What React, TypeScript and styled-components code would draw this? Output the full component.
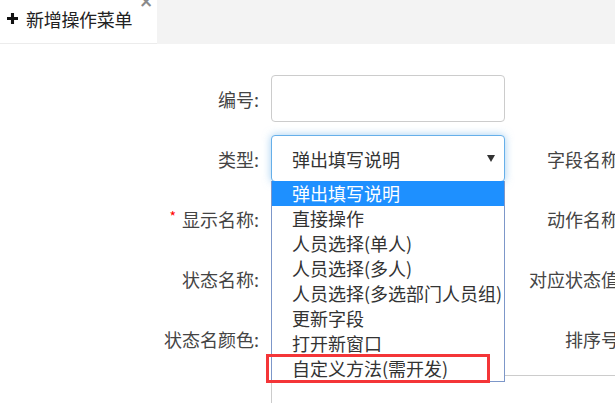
import React from 'react';
import styled, {createGlobalStyle} from "styled-components";

const GlobalStyle = createGlobalStyle`
  html, body {
    margin: 0;
    padding: 0;
    background: #fff;
    overflow: hidden;
  }
  body {
    font-family: "Noto Sans CJK SC", "Noto Sans", sans-serif;
    color: #333;
  }
`

const typeOptions = [
    '弹出填写说明',
    '直接操作',
    '人员选择(单人)',
    '人员选择(多人)',
    '人员选择(多选部门人员组)',
    '更新字段',
    '打开新窗口',
    '自定义方法(需开发)',
]

interface RowData {
    label: string;
    required?: boolean;
    right?: string;
}

const rows: RowData[] = [
    {label: '编号'},
    {label: '类型', right: '字段名称'},
    {label: '显示名称', required: true, right: '动作名称'},
    {label: '状态名称', right: '对应状态值'},
    {label: '状态名颜色', right: '排序号'},
]

export default function App() {
    return (
        <Page>
            <GlobalStyle/>
            <TabBar>
                <Tab>
                    <PlusIcon viewBox="0 0 10 10">
                        <path d="M3.6 0h2.8v3.6H10v2.8H6.4V10H3.6V6.4H0V3.6h3.6z"/>
                    </PlusIcon>
                    <TabTitle>新增操作菜单</TabTitle>
                    <CloseIcon>×</CloseIcon>
                </Tab>
            </TabBar>

            <Form>
                {rows.map((row, i) => (
                    <React.Fragment key={row.label}>
                        <Label>
                            {row.required && <Star>*</Star>}
                            {row.label}:
                        </Label>
                        {i === 1 ? (
                            <SelectWrap>
                                <Select>
                                    <span>{typeOptions[0]}</span>
                                    <Caret/>
                                </Select>
                                <OptionList>
                                    {typeOptions.map((opt, idx) => (
                                        <Option key={opt} $active={idx === 0}>
                                            {opt}
                                            {idx === typeOptions.length - 1 && <Highlight/>}
                                        </Option>
                                    ))}
                                </OptionList>
                            </SelectWrap>
                        ) : (
                            <Input/>
                        )}
                        {row.right ? (
                            <>
                                <Label>{row.right}:</Label>
                                <Input/>
                            </>
                        ) : (
                            <Spacer/>
                        )}
                    </React.Fragment>
                ))}
                <Label/>
                <TextArea/>
            </Form>
        </Page>
    );
}


const Page = styled.div`
  width: 615px;
  height: 403px;
  overflow: hidden;
`

const TabBar = styled.div`
  display: flex;
  height: 44px;
  background: #f3f3f3;
`

const Tab = styled.div`
  position: relative;
  display: flex;
  align-items: center;
  gap: 8px;
  width: 157px;
  box-sizing: border-box;
  padding: 0 0 6px 7px;
  background: #fff;
  border-bottom: 1px solid #ececec;
`

const PlusIcon = styled.svg`
  width: 11px;
  height: 11px;
  fill: #111;
`

const TabTitle = styled.span`
  font-size: 18px;
  color: #222;
  letter-spacing: -0.3px;
`

const CloseIcon = styled.span`
  position: absolute;
  top: -9px;
  left: 139px;
  font-family: "DejaVu Sans", sans-serif;
  font-size: 17px;
  font-weight: bold;
  color: #8a8a8a;
`

const Form = styled.div`
  display: grid;
  grid-template-columns: 259px 234px 107px 300px;
  column-gap: 12px;
  grid-auto-rows: 47px;
  row-gap: 13px;
  padding-top: 31px;
`

const Label = styled.label`
  display: flex;
  align-items: center;
  justify-content: flex-end;
  font-size: 18px;
  color: #444;
  white-space: nowrap;
`

const Star = styled.span`
  color: #f00;
  font-size: 14px;
  margin-right: 6px;
  align-self: center;
  transform: translateY(-3px);
`

const Input = styled.div`
  box-sizing: border-box;
  border: 1px solid #ccc;
  border-radius: 4px;
  background: #fff;
`

const Spacer = styled.div`
  grid-column: span 2;
`

const SelectWrap = styled.div`
  position: relative;
`

const Select = styled.div`
  box-sizing: border-box;
  height: 47px;
  display: flex;
  align-items: center;
  justify-content: space-between;
  padding: 0 9px 0 20px;
  border: 1px solid #66afe9;
  border-radius: 4px;
  box-shadow: 0 0 8px rgba(102, 175, 233, 0.6);
  font-size: 18px;
  color: #333;
  background: #fff;
`

const Caret = styled.span`
  width: 0;
  height: 0;
  border-left: 4px solid transparent;
  border-right: 4px solid transparent;
  border-top: 7px solid #333;
`

const OptionList = styled.ul`
  position: absolute;
  z-index: 2;
  top: 46px;
  left: 0;
  width: 100%;
  box-sizing: border-box;
  margin: 0;
  padding: 0;
  list-style: none;
  background: #fff;
  border: 1px solid #7d97c9;
  border-top: none;
`

const Option = styled.li<{ $active?: boolean }>`
  position: relative;
  height: 25px;
  line-height: 24px;
  padding-left: 20px;
  font-size: 18px;
  white-space: nowrap;
  color: ${p => p.$active ? '#fff' : '#333'};
  background: ${p => p.$active ? '#1e90ff' : 'transparent'};
`

const Highlight = styled.span`
  position: absolute;
  left: -6px;
  right: 14px;
  top: -2px;
  bottom: -2px;
  border: 3px solid #f43538;
`

const TextArea = styled.div`
  grid-column: span 3;
  height: 90px;
  box-sizing: border-box;
  border: 1px solid #ccc;
  border-radius: 4px;
`
